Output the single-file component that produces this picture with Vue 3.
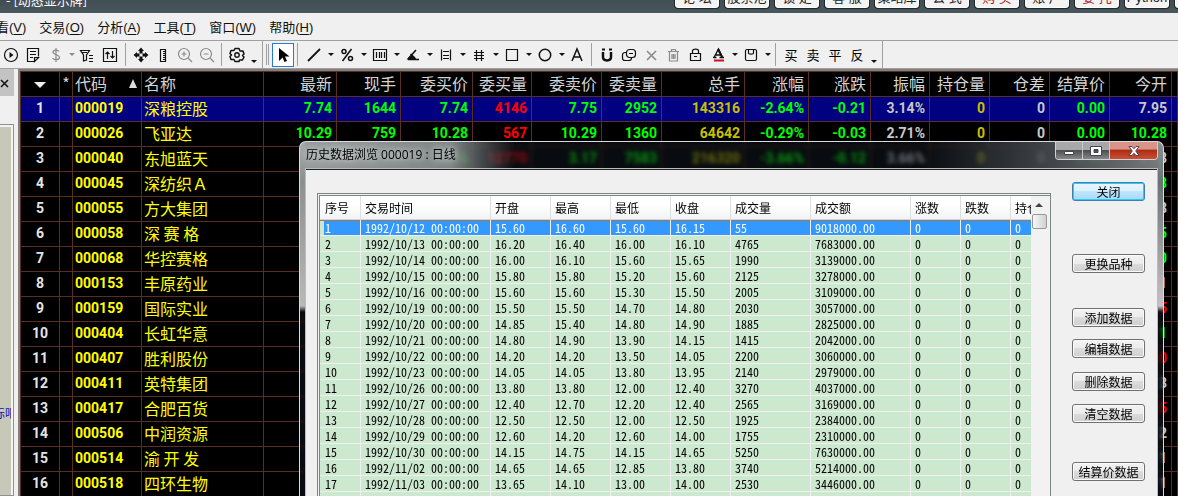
<script setup>
const shortcuts = [
  { label: '论 坛' }, { label: '股票池' }, { label: '锁 定' }, { label: '客 服' }, { label: '策略库' },
  { label: '公 式' }, { label: '购 买', hot: true }, { label: '账 户' }, { label: '委 托', hot: true },
  { label: 'Python' }, { label: '' },
]

const menus = [['查看', 'V'], ['交易', 'O'], ['分析', 'A'], ['工具', 'T'], ['窗口', 'W'], ['帮助', 'H']]

const art = {
  play: '<circle cx="8" cy="8" r="6.5"/><path d="M6.5 5v6l4-3z" fill="currentColor" stroke="none"/>',
  note: '<path d="M13.5 9.500V1.500h-11v13h6.500M13.500 10.500H9.500v4zM5 4.500h6M5 7.500h6M5 10.500h3"/>',
  dollar: '<path d="M11 4.500c-1-2-6-2-6 .5 0 3 6.500 2.500 6.500 5.500 0 2.500-5.500 3-7 .5M8 1v14"/>',
  filter: '<path d="M1.500 3.500h9L7.500 8v5l-3 1V8zM3 5.500h5M10 8.500h4M10 11.500h4M10 14.500h4"/>',
  swap: '<path d="M1.500 1.500h13v13h-13zM5.500 12V5M3.500 7l2-2 2 2M10.500 4v7M8.500 9l2 2 2-2"/>',
  move: '<path d="M8 .5l3 3.500H5zM8 15.500l3-3.500H5zM.5 8L4 5v6zM15.500 8L12 5v6z" fill="currentColor" stroke="none"/><path d="M8 3v3.500M8 9.500v3.500M3 8h3.500M9.500 8h3.500" stroke-width="3"/>',
  ruler: '<path d="M5.500 2.500h5v12h-5zM8 4.500h2M8 6.500h2M8 8.500h2M8 10.500h2M8 12.500h2"/>',
  zin: '<circle cx="7" cy="7" r="5.500"/><path d="M11 11l4 4M4.500 7h5M7 4.500v5"/>',
  zout: '<circle cx="7" cy="7" r="5.500"/><path d="M11 11l4 4M4.500 7h5"/>',
  gear: '<path d="M6 1.500h4l1 2.500 3 0 1 3-1.500 1.500 1.500 1.500-1.500 3h-3L10 14.500H6L5 12.500H2L1 9.500 2.500 8 1 6.500 2 3.500h3z" stroke-width="1.500" stroke-linejoin="round"/><circle cx="8" cy="8" r="2.200" stroke-width="1.400"/>',
  cursor: '<path d="M4 1v13l3.500-3.500L9.500 15l2.500-1-2-4.500h4.500z" fill="currentColor" stroke="none"/>',
  line: '<path d="M2 14L14 2" stroke-width="1.800"/>',
  percent: '<path d="M12.500 2L3.500 14" stroke-width="1.500"/><circle cx="5" cy="4.500" r="2" stroke-width="1.500"/><circle cx="11.500" cy="11.500" r="2" stroke-width="1.500"/>',
  bars: '<path d="M1.500 2.500h13v11h-13zM4.500 5v6M7.500 5v6M9.500 5v6M12.500 5v6"/>',
  angle: '<path d="M3 12L11 3M3 12.500h11M5.500 7l4.500 4" stroke-width="1.600"/><path d="M3 12l3.500-3.500L10.500 12z" fill="currentColor"/>',
  levels: '<path d="M3.500 2.500v11M12.500 2.500v11M5 4.500h6M5 8.500h6M5 11.500h6"/>',
  hash: '<path d="M5.500 3v11M10.500 3v11M3 5.500h10M3 8.500h10M3 11.500h10"/>',
  square: '<path d="M2.500 2.500h11v11h-11z"/>',
  circle: '<circle cx="8" cy="8" r="5.700" stroke-width="1.500"/>',
  letter: '<path d="M3 14L8 2l5 12M5 10h6" stroke-width="1.500"/>',
  magnet: '<path d="M4 5v5c0 4.500 8 4.500 8 0V5" stroke-width="2.500"/><path d="M3 2.500h3M10 2.500h3" stroke-width="2"/>',
  clone: '<rect x="5.500" y="2.500" width="9" height="8" rx="3"/><path d="M5 5.500H4c-1.500 0-2.500 1-2.500 2.500v3c0 1.500 1 2.500 2.500 2.500h4c1.500 0 2.500-1 2.500-2.500M8 6.500h4"/>',
  cross: '<path d="M4 4l9 9M13 4l-9 9" stroke-width="1.600"/>',
  trash: '<path d="M3 4.500h11M6.500 4V2.500h4V4M4.500 5v9h8V5M7 7v5M8.500 7v5M10 7v5"/>',
  lock: '<path d="M3.500 6.500h10v7h-10zM5.500 6V4c0-2.500 6-2.500 6 0v2M7 9.500h3"/>',
  color: '<path d="M4 10.500L8.500 2l4 8.500M5.500 8h5M3 10.500h3.500M9.500 10.500H14" stroke-width="1.400"/><path d="M8 2l4 8" stroke-width="2"/><path d="M4 13.500h10" stroke="#c8102e" stroke-width="2"/>',
  save: '<rect x="2.500" y="2.500" width="11" height="11" rx="1.500"/><path d="M5.500 3v3c0 1.500 5 1.500 5 0V3"/>',
}

const leftTools = [
  { icon: 'play', tip: '播放' }, { icon: 'note', tip: '备注' }, { icon: 'dollar', tip: '资金', off: true, wide: true },
  { caret: true, off: true, slim: true }, { icon: 'filter', tip: '筛选' }, { icon: 'swap', tip: '排序', wide: true }, { sep: true },
  { icon: 'move', tip: '移动' }, { icon: 'ruler', tip: '标尺' }, { icon: 'zin', tip: '放大', off: true }, { icon: 'zout', tip: '缩小', off: true },
  { sep: true }, { icon: 'gear', tip: '设置' }, { caret: true, low: true },
]
const drawn = [['line', '直线'], ['percent', '百分比'], ['bars', '周期线'], ['angle', '角度'], ['levels', '区间'], ['hash', '网格'], ['square', '矩形'], ['circle', '圆']]
const rightTools = [
  { icon: 'cursor', tip: '选择', on: true }, { sep: true },
  ...drawn.flatMap(([icon, tip]) => [{ icon, tip, wide: true }, { caret: true }]),
  { icon: 'letter', tip: '文字' }, { sep: true },
  { icon: 'magnet', tip: '吸附' }, { icon: 'clone', tip: '复制' }, { icon: 'cross', tip: '取消', off: true }, { icon: 'trash', tip: '删除', off: true },
  { icon: 'lock', tip: '锁定' }, { icon: 'color', tip: '颜色', wide: true }, { caret: true },
  { icon: 'save', tip: '保存', wide: true }, { caret: true }, { sep: true },
  { text: '买' }, { text: '卖' }, { text: '平' }, { text: '反' }, { caret: true, low: true },
]

const quoteHeads = ['最新', '现手', '委买价', '委买量', '委卖价', '委卖量', '总手', '涨幅', '涨跌', '振幅', '持仓量', '仓差', '结算价', '今开']
const baseTones = ['g', 'g', 'g', 'r', 'g', 'g', 'y', 'g', 'g', 'w', 'y', 'w', 'g']
const blank = Array(13).fill('')
const quotes = [
  ['000019', '深粮控股', ['7.74', '1644', '7.74', '4146', '7.75', '2952', '143316', '-2.64%', '-0.21', '3.14%', '0', '0', '0.00', '7.95'], 'w'],
  ['000026', '飞亚达', ['10.29', '759', '10.28', '567', '10.29', '1360', '64642', '-0.29%', '-0.03', '2.71%', '0', '0', '0.00', '10.28'], 'g'],
  ['000040', '东旭蓝天', ['', '', '3.16', '12770', '3.17', '7583', '216320', '-3.66%', '-0.12', '3.66%', '0', '0', '0.00', '3.28'], 'w'],
  ['000045', '深纺织Ａ', [...blank, '8'], 'g'],
  ['000055', '方大集团', [...blank, '8'], 'w'],
  ['000058', '深 赛 格', [...blank, '5'], 'g'],
  ['000068', '华控赛格', [...blank, '0'], 'g'],
  ['000153', '丰原药业', [...blank, '1'], 'w'],
  ['000159', '国际实业', [...blank, '5'], 'r'],
  ['000404', '长虹华意', [...blank, '1'], 'g'],
  ['000407', '胜利股份', [...blank, '0'], 'r'],
  ['000411', '英特集团', [...blank, '3'], 'w'],
  ['000417', '合肥百货', [...blank, '5'], 'r'],
  ['000506', '中润资源', [...blank, '2'], 'w'],
  ['000514', '渝 开 发', [...blank, '1'], 'w'],
  ['000518', '四环生物', [...blank, '1'], 'w'],
]

const historyHeads = ['序号', '交易时间', '开盘', '最高', '最低', '收盘', '成交量', '成交额', '涨数', '跌数', '持仓']
const history = [
  ['10/12', '15.60', '16.60', '15.60', '16.15', '55', '9018000.00'],
  ['10/13', '16.20', '16.40', '16.00', '16.10', '4765', '7683000.00'],
  ['10/14', '16.00', '16.10', '15.60', '15.65', '1990', '3139000.00'],
  ['10/15', '15.80', '15.80', '15.20', '15.60', '2125', '3278000.00'],
  ['10/16', '15.60', '15.60', '15.30', '15.50', '2005', '3109000.00'],
  ['10/19', '15.50', '15.50', '14.70', '14.80', '2030', '3057000.00'],
  ['10/20', '14.85', '15.40', '14.80', '14.90', '1885', '2825000.00'],
  ['10/21', '14.80', '14.90', '13.90', '14.15', '1415', '2042000.00'],
  ['10/22', '14.20', '14.20', '13.50', '14.05', '2200', '3060000.00'],
  ['10/23', '14.05', '14.05', '13.80', '13.95', '2140', '2979000.00'],
  ['10/26', '13.80', '13.80', '12.00', '12.40', '3270', '4037000.00'],
  ['10/27', '12.40', '12.70', '12.20', '12.40', '2565', '3169000.00'],
  ['10/28', '12.50', '12.50', '12.00', '12.50', '1925', '2384000.00'],
  ['10/29', '12.60', '14.20', '12.60', '14.00', '1755', '2310000.00'],
  ['10/30', '14.15', '14.75', '14.15', '14.65', '5250', '7630000.00'],
  ['11/02', '14.65', '14.65', '12.85', '13.80', '3740', '5214000.00'],
  ['11/03', '13.65', '14.10', '13.00', '14.00', '2530', '3446000.00'],
].map(([day, ...rest], i) => [i + 1, `1992/${day} 00:00:00`, ...rest, '0', '0', '0'])

const actions = [
  { label: '关闭', main: true, gap: 'g0' }, { label: '更换品种', gap: 'g53' }, { label: '添加数据', gap: 'g35' },
  { label: '编辑数据', gap: 'g12' }, { label: '删除数据', gap: 'g14' }, { label: '清空数据', gap: 'g13' }, { label: '结算价数据', gap: 'g39' },
]
</script>

<template>
  <div class="app">
    <header class="caption">
      <span class="caption-text">- [动态显示牌]</span>
      <nav class="shortcuts">
        <button v-for="(s, i) in shortcuts" :key="i" type="button" :class="{ hot: s.hot }">{{ s.label }}</button>
      </nav>
    </header>

    <nav class="menubar">
      <button v-for="m in menus" :key="m[1]" type="button">{{ m[0] }}(<u>{{ m[1] }}</u>)</button>
    </nav>

    <div class="toolbars">
      <div v-for="(group, gi) in [leftTools, rightTools]" :key="gi" class="tools">
        <i v-if="gi === 1" class="grip"></i>
        <template v-for="(t, i) in group" :key="i">
          <i v-if="t.sep" class="sep"></i>
          <button v-else-if="t.caret" type="button" class="caret" :class="{ low: t.low, off: t.off, slim: t.slim }" aria-label="更多"><i></i></button>
          <button v-else-if="t.text" type="button" class="tool word">{{ t.text }}</button>
          <button v-else type="button" class="tool" :class="{ wide: t.wide, off: t.off, on: t.on }" :aria-label="t.tip">
            <svg width="16" height="16" viewBox="0 0 16 16" fill="none" stroke="currentColor" stroke-width="1.200" v-html="art[t.icon]"></svg>
          </button>
        </template>
      </div>
    </div>

    <main class="work">
      <aside class="side">
        <div class="tab"><button type="button" aria-label="关闭面板">
          <svg width="9" height="9" viewBox="0 0 9 9" stroke="#111" stroke-width="1.500"><path d="M1 1l7 7M8 1L1 8" /></svg>
        </button></div>
        <div class="pane"><a href="#">标吧</a></div>
      </aside>

      <section class="board">
        <table class="quotes">
          <colgroup>
            <col class="w39"><col class="w13"><col class="w69"><col class="w122"><col class="w73"><col class="w64"><col class="w72">
            <col class="w59"><col class="w70"><col class="w60"><col class="w83"><col class="w64"><col class="w62"><col class="w59">
            <col class="w60"><col class="w60"><col class="w60"><col class="w62"><col>
          </colgroup>
          <thead>
            <tr>
              <th class="mid"><i class="down"></i></th>
              <th class="mid star">*</th>
              <th class="left"><span class="sorted">代码<i class="up"></i></span></th>
              <th class="left">名称</th>
              <th v-for="h in quoteHeads" :key="h">{{ h }}</th>
              <th></th>
            </tr>
          </thead>
          <tbody>
            <tr v-for="(q, i) in quotes" :key="q[0]" :class="{ current: i === 0 }">
              <td class="mid no">{{ i + 1 }}</td>
              <td></td>
              <td class="left code">{{ q[0] }}</td>
              <td class="left name">{{ q[1] }}</td>
              <td v-for="(v, k) in q[2]" :key="k" :class="k === 13 ? q[3] : baseTones[k]">{{ v }}</td>
              <td></td>
            </tr>
          </tbody>
        </table>
      </section>

      <section class="dialog" role="dialog" aria-labelledby="dialog-title">
        <header class="dialog-bar">
          <h1 id="dialog-title">历史数据浏览 000019 : 日线</h1>
          <div class="window-buttons">
            <button type="button" aria-label="最小化"><svg width="12" height="12" viewBox="0 0 12 12"><path d="M1.500 6.500h9v3h-9z" fill="#fff" stroke="#444" /></svg></button>
            <button type="button" aria-label="最大化"><svg width="12" height="12" viewBox="0 0 12 12"><path d="M.5 1.500h11v9H.5zM4 4.500h4v3H4z" fill="#fff" fill-rule="evenodd" stroke="#445" /></svg></button>
            <button type="button" class="quit" aria-label="关闭窗口"><svg width="12" height="12" viewBox="0 0 12 12"><path d="M1 1.500h3l2 2.300 2-2.300h3L7.700 6 11 10.500H8L6 8.200 4 10.500H1L4.300 6z" fill="#fff" stroke="#545" /></svg></button>
          </div>
        </header>
        <div class="dialog-body">
          <div class="list">
            <div class="list-view">
              <table class="history">
                <colgroup>
                  <col class="w41"><col class="w130"><col class="w60"><col class="w60"><col class="w60"><col class="w60">
                  <col class="w80"><col class="w100"><col class="w50"><col class="w50"><col>
                </colgroup>
                <thead><tr><th v-for="h in historyHeads" :key="h">{{ h }}</th></tr></thead>
                <tbody>
                  <tr v-for="(r, i) in history" :key="r[0]" :class="{ picked: i === 0 }">
                    <td v-for="(v, k) in r" :key="k">{{ v }}</td>
                  </tr>
                  <tr><td v-for="h in historyHeads" :key="h"></td></tr>
                </tbody>
              </table>
            </div>
            <div class="scroll"><i class="arrow"></i><i class="thumb"></i></div>
          </div>
          <div class="actions">
            <button v-for="a in actions" :key="a.label" type="button" :class="[a.gap, { main: a.main }]">{{ a.label }}</button>
          </div>
        </div>
      </section>
    </main>
  </div>
</template>

<style>
body { margin: 0; overflow: hidden; }
</style>

<style scoped>
* { box-sizing: border-box; }
button { margin: 0; padding: 0; border: 0; background: none; font: inherit; color: inherit; white-space: nowrap; }
.app { height: 100vh; display: flex; flex-direction: column; overflow: hidden; background: #f0f0f0; font-family: "Liberation Sans", "Noto Sans CJK SC", sans-serif; }

.caption { flex: none; height: 13px; display: flex; justify-content: space-between; align-items: flex-end; padding-left: 6px; overflow: hidden; background: linear-gradient(#414d53, #49585e); }
.caption-text { height: 20px; line-height: 20px; margin-bottom: 3px; font-family: "Noto Sans CJK SC", sans-serif; font-size: 13px; color: #fff; white-space: pre; }
.shortcuts { display: flex; gap: 6px; margin-bottom: 5px; margin-right: -41px; }
.shortcuts button { width: 44px; height: 20px; line-height: 18px; font-size: 13px; white-space: pre; color: #222; background: #f3f3f3; border: 1px solid #fff; border-radius: 3px; box-shadow: 0 0 0 1px #20282c; }
.shortcuts .hot { color: #b01818; }

.menubar { flex: none; height: 28px; display: flex; align-items: center; gap: 13px; margin-left: -17px; border-bottom: 1px solid #a0a0a0; font-size: 13px; color: #111; }
.menubar u { text-underline-offset: 2px; }

.toolbars { flex: none; height: 28px; display: flex; background: #f0f0f0; border-bottom: 1px solid #a0a0a0; }
.tools { display: flex; align-items: center; padding-right: 2px; border-right: 1px solid #a0a0a0; color: #111; }
.tool { flex: none; width: 22px; height: 24px; display: flex; align-items: center; justify-content: center; }
.tool.wide { width: 24px; }
.tool.on { background: #fff; border: 1px solid #2a7ad0; color: #000; }
.tool.word { font: 13px "Noto Sans CJK SC", sans-serif; color: #000; }
.tool.off, .caret.off { color: #8a8a8a; }
.caret { flex: none; width: 9px; height: 24px; display: flex; align-items: center; justify-content: center; }
.caret i { border: 3px solid transparent; border-top-color: currentColor; border-bottom: 0; }
.caret.low { width: 12px; align-items: flex-end; padding-bottom: 4px; }
.caret.slim { width: 8px; }
.sep { flex: none; width: 1px; height: 23px; margin: 0 4px 0 3px; background: #a0a0a0; }
.grip { width: 3px; height: 21px; margin: 0 3px; border: solid #a0a0a0; border-width: 0 1px; }

.work { flex: 1; min-height: 0; position: relative; display: flex; }
.side { flex: none; width: 18px; display: flex; flex-direction: column; }
.tab { flex: none; width: 14px; height: 27px; background: #c3c3c3; display: flex; align-items: center; }
.pane { flex: 1; width: 14px; margin-top: 28px; display: flex; flex-direction: column; padding-top: 280px; overflow: hidden; background: #c8c8b8; border: 1px solid #909090; border-left: 0; box-shadow: inset -2px 2px 0 #f4f4f4; }
.pane a { font: 12px "Noto Sans CJK SC", sans-serif; line-height: 16px; color: #0018b0; white-space: nowrap; text-decoration: none; margin-left: -7px; width: 18px; overflow: hidden; }

.board { flex: 1; min-width: 0; overflow: hidden; background: #000; border-left: 2px solid #808080; border-top: 2px solid #808080; }
table { border-collapse: separate; border-spacing: 0; table-layout: fixed; width: 100%; }
.quotes { border-left: 1px solid #5a2e20; border-top: 1px solid #5a2e20; }
.quotes th, .quotes td { height: 25px; padding: 0 4px 2px 0; border-right: 1px solid #5a2e20; border-bottom: 1px solid #5a2e20; text-align: right; white-space: pre; overflow: hidden; }
.quotes th { font: 16px "Noto Sans CJK SC", sans-serif; line-height: 20px; color: #d4d4d4; }
.quotes td { font: 700 14px Roboto, "Noto Sans CJK SC", sans-serif; line-height: 20px; }
.quotes .left { text-align: left; padding: 0 2px 2px; }
.quotes .mid { text-align: center; padding: 0 0 2px; }
.quotes .no { color: #e4e4e4; }
.quotes .code { color: #ff0; }
.quotes .name { color: #ff0; font: 16px "Noto Sans CJK SC", sans-serif; line-height: 20px; }
.current td { background: #000080; }
.g { color: #0f0; } .r { color: #f00; } .y { color: #c8c000; } .w { color: #c8c8c8; }
.down, .up { display: inline-block; border: 6px solid transparent; }
.down { border-top-color: #eee; border-bottom: 0; vertical-align: 2px; }
.sorted { display: flex; align-items: center; justify-content: space-between; padding-right: 2px; }
.up { border-width: 0 4px 9px; border-bottom-color: #ddd; }

.w13 { width: 13px; } .w39 { width: 39px; } .w41 { width: 41px; } .w50 { width: 50px; } .w59 { width: 59px; } .w60 { width: 60px; }
.w62 { width: 62px; } .w64 { width: 64px; } .w69 { width: 69px; } .w70 { width: 70px; } .w72 { width: 72px; } .w73 { width: 73px; }
.w80 { width: 80px; } .w83 { width: 83px; } .w100 { width: 100px; } .w122 { width: 122px; } .w130 { width: 130px; }

.dialog { position: absolute; left: 299px; right: 14px; top: 72px; bottom: 0; display: flex; flex-direction: column; padding: 0 5px; overflow: hidden; border: 1px solid #d8dce0; border-bottom: 0; border-radius: 7px 7px 0 0; backdrop-filter: blur(2px);
  background:
    linear-gradient(#a4a8a8, #8c9090 40px, #b8b8b8 164px, transparent 170px) left / 5px 100% no-repeat,
    linear-gradient(#8a9090, #6a7274 40px, #c8c0c4 164px, transparent 170px) right / 5px 100% no-repeat,
    linear-gradient(90deg, rgba(160, 164, 164, .95), rgba(140, 146, 146, .9) 150px, transparent 215px) 0 0 / 100% 27px no-repeat,
    linear-gradient(270deg, rgba(130, 134, 136, .9), rgba(80, 84, 88, .8) 110px, transparent 240px) 0 0 / 100% 27px no-repeat,
    rgba(16, 22, 30, .5); }
.dialog-bar { flex: none; height: 26px; display: flex; justify-content: space-between; align-items: flex-start; }
h1 { margin: 0; padding-left: 1px; font: 12px "Open Sans", "Noto Sans CJK SC", sans-serif; line-height: 26px; color: #000; white-space: nowrap; text-shadow: 0 0 6px #d8dcdc, 0 0 8px #d8dcdc; }
.window-buttons { display: flex; height: 18px; border: 1px solid #d0d0d0; border-top: 0; border-radius: 0 0 4px 4px; overflow: hidden; }
.window-buttons button { width: 27px; display: flex; align-items: center; justify-content: center; background: linear-gradient(#a8a8a8 0 45%, #4c5052 50%, #84888a); border-right: 1px solid #ccc; }
.window-buttons .quit { width: 47px; border-right: 0; background: linear-gradient(#d89488 0 40%, #b02c14 50%, #c85038); }
.dialog-body { flex: 1; min-height: 0; display: flex; align-items: flex-start; padding: 24px 12px 0 11px; background: #f0f0f0; border: 1px solid #b8bcbc; border-bottom: 0; box-shadow: inset 0 1px #222; }
.list { flex: 1; min-width: 0; display: flex; border: 3px double #7c8884; border-right: 1px solid #7c8884; border-bottom: 0; }
.list-view { flex: 1; min-width: 0; overflow: hidden; background: #cce8cf; }
.history { font: 12px "Noto Sans CJK SC", sans-serif; font-feature-settings: "hwid" 1; color: #000; }
.history th { height: 24px; padding: 0 0 0 4px; font-weight: 400; text-align: left; line-height: 20px; white-space: nowrap; overflow: hidden; background: linear-gradient(#fff 40%, #f2f3f5); border-right: 1px solid #dedfe1; border-bottom: 1px solid #d5d5d5; }
.history td { height: 16px; padding: 0 0 0 4px; line-height: 15px; white-space: nowrap; overflow: hidden; border-right: 1px solid #f0f0f0; border-bottom: 1px solid #f0f0f0; }
.history th:first-child, .history td:first-child { padding-left: 5px; }
.history th:last-child, .history td:last-child { border-right: 0; }
.picked td { color: #fff; background: #39f; box-shadow: inset 0 1px #a07850; }
.picked td:first-child { background: linear-gradient(90deg, #cce8cf 4px, #39f 4px); }
.scroll { flex: none; width: 19px; display: flex; flex-direction: column; align-items: center; background: #f2f2f2; padding: 7px 3px 0 0; }
.arrow { border: 4px solid transparent; border-top: 0; border-bottom-color: #444; margin-bottom: 7px; }
.thumb { width: 15px; height: 15px; border: 1px solid #989898; border-radius: 2px; background: linear-gradient(90deg, #f6f6f6, #d0d2d4); }
.actions { flex: none; width: 73px; margin: -11px 0 0 21px; display: flex; flex-direction: column; }
.actions button { height: 19px; font: 12px "Noto Sans CJK SC", sans-serif; line-height: 16px; color: #000; border: 1px solid #707070; border-radius: 3px; background: linear-gradient(#f3f3f3, #ebebeb 50%, #dcdcdc 50%, #cfcfcf); box-shadow: inset 0 0 0 1px #fbfbfb; }
.actions .main { border-color: #3c7fb1; background: linear-gradient(#eaf6fd, #d9f0fc 50%, #bee6fd 50%, #a7d9f5); box-shadow: inset 0 0 0 1px #30c8f8; }
.g12 { margin-top: 12px; } .g13 { margin-top: 13px; } .g14 { margin-top: 14px; } .g35 { margin-top: 35px; } .g39 { margin-top: 39px; } .g53 { margin-top: 53px; }
</style>
